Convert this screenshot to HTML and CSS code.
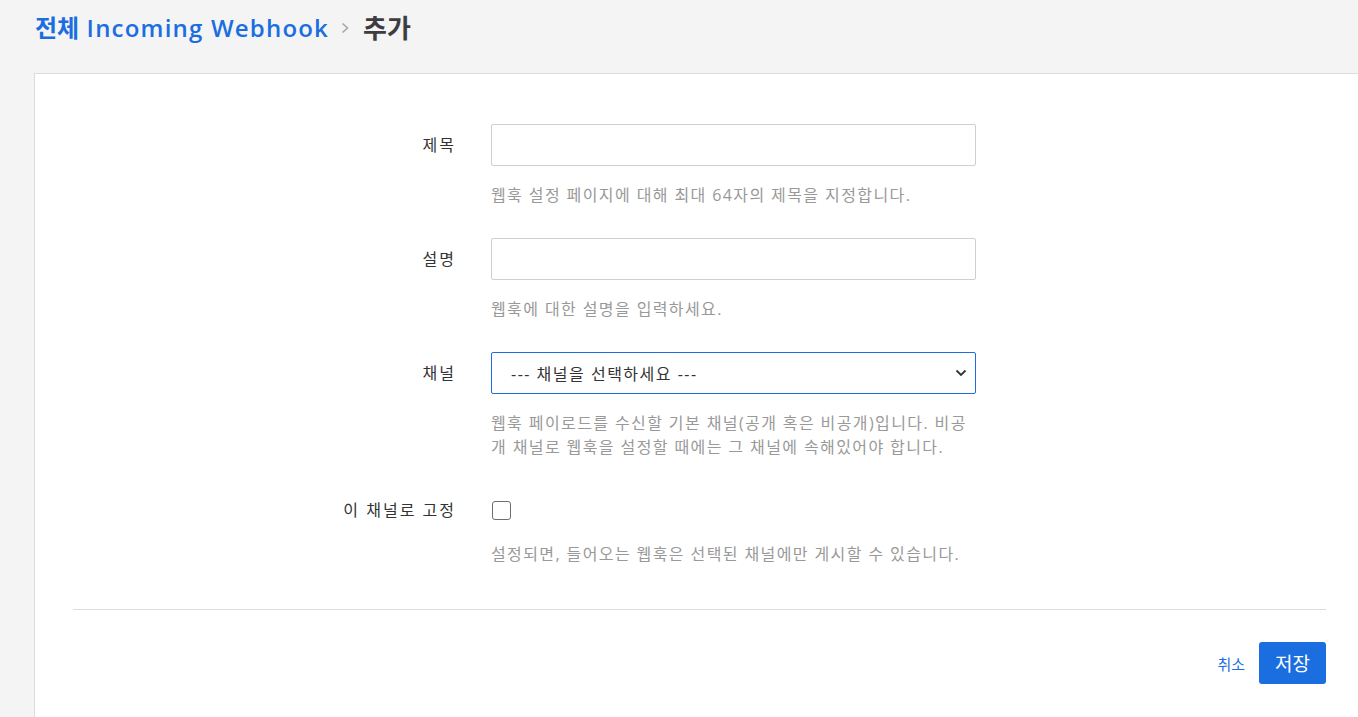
FILE: index.html
```html
<!DOCTYPE html>
<html lang="ko">
<head>
<meta charset="utf-8">
<link rel="stylesheet" href="styles.css">
</head>
<body>
<div class="page">
  <h1 class="crumb">
    <span class="crumb-link"><b class="crumb-ko">전체</b> Incoming Webhook</span>
    <svg class="crumb-sep" width="12" height="14" viewBox="0 0 12 14"><path d="M3.5 2.5 L8.5 7 L3.5 11.5" fill="none" stroke="#a6a6a8" stroke-width="1.6"/></svg>
    <span class="crumb-cur">추가</span>
  </h1>
  <div class="panel">
    <form class="form">
      <div class="row">
        <label class="label">제목</label>
        <div class="field">
          <input class="input" type="text">
          <div class="help">웹훅 설정 페이지에 대해 최대 64자의 제목을 지정합니다.</div>
        </div>
      </div>
      <div class="row">
        <label class="label">설명</label>
        <div class="field">
          <input class="input" type="text">
          <div class="help">웹훅에 대한 설명을 입력하세요.</div>
        </div>
      </div>
      <div class="row">
        <label class="label">채널</label>
        <div class="field">
          <div class="select">
            <span>--- 채널을 선택하세요 ---</span>
            <svg width="12" height="8" viewBox="0 0 12 8"><path d="M1.5 1.5 L6 6 L10.5 1.5" fill="none" stroke="#333" stroke-width="1.8"/></svg>
          </div>
          <div class="help">웹훅 페이로드를 수신할 기본 채널(공개 혹은 비공개)입니다. 비공개 채널로 웹훅을 설정할 때에는 그 채널에 속해있어야 합니다.</div>
        </div>
      </div>
      <div class="row row-check">
        <label class="label">이 채널로 고정</label>
        <div class="field">
          <div class="check-wrap"><span class="checkbox"></span></div>
          <div class="help">설정되면, 들어오는 웹훅은 선택된 채널에만 게시할 수 있습니다.</div>
        </div>
      </div>
    </form>
    <div class="footer">
      <a class="cancel">취소</a>
      <button class="save" type="button">저장</button>
    </div>
  </div>
</div>
</body>
</html>
```
FILE: styles.css
```css
html, body {
  margin: 0;
  padding: 0;
  background: #f4f4f4;
  overflow: hidden;
  font-family: "Open Sans", "Noto Sans CJK KR", sans-serif;
}
.page {
  width: 1358px;
  height: 717px;
  overflow: hidden;
}
.crumb {
  margin: 0;
  padding: 0 0 17px 35px;
  height: 73px;
  box-sizing: border-box;
  display: flex;
  align-items: center;
  font-size: 24px;
  font-weight: 600;
  line-height: 38px;
}
.crumb-link { color: #1a6ee0; letter-spacing: 1.2px; }
.crumb-ko { font-weight: 700; letter-spacing: 0; }
.crumb-sep { margin: 0 12px 0 10px; }
.crumb-cur { color: #3d3c40; font-weight: 700; font-size: 26px; }
.panel {
  margin-left: 34px;
  width: 1331px;
  height: 700px;
  background: #fff;
  border: 1px solid #dcdcdc;
  box-sizing: border-box;
  padding: 50px 38px 0 38px;
}
.form {
  display: flex;
  flex-direction: column;
  gap: 31px;
}
.row {
  display: grid;
  grid-template-columns: 383px 485px;
  column-gap: 35px;
}
.label {
  text-align: right;
  font-size: 16px;
  letter-spacing: 2px;
  color: #333;
  line-height: 42px;
}
.field { display: flex; flex-direction: column; }
.input {
  height: 42px;
  box-sizing: border-box;
  border: 1px solid #cfcfd1;
  border-radius: 2px;
  margin: 0;
  padding: 0 12px;
  font: inherit;
}
.select {
  height: 42px;
  box-sizing: border-box;
  border: 1px solid #1a6ee0;
  border-radius: 2px;
  display: flex;
  align-items: center;
  justify-content: space-between;
  padding: 0 8px 0 19px;
  font-size: 16px;
  letter-spacing: 1.5px;
  color: #333;
}
.help {
  margin-top: 17px;
  font-size: 16px;
  line-height: 24px;
  color: #999;
  letter-spacing: 1.4px;
  word-break: break-all;
}
.row-check .label { line-height: 40px; }
.check-wrap { height: 40px; display: flex; align-items: center; }
.checkbox {
  width: 19px;
  height: 19px;
  border: 1px solid #6e6e70;
  border-radius: 3px;
  margin-left: 1px;
  box-sizing: border-box;
}
.row-check .help { margin-top: 12px; }
.footer {
  margin-top: 43px;
  border-top: 1px solid #dcdcdc;
  padding-top: 32px;
  display: flex;
  justify-content: flex-end;
  align-items: center;
  gap: 14px;
}
.cancel {
  color: #1a6ee0;
  font-size: 15px;
  cursor: pointer;
}
.save {
  width: 67px;
  height: 42px;
  background: #1a6ee0;
  color: #fff;
  border: 0;
  border-radius: 3px;
  font-family: inherit;
  font-size: 19px;
  padding: 0;
}
```
